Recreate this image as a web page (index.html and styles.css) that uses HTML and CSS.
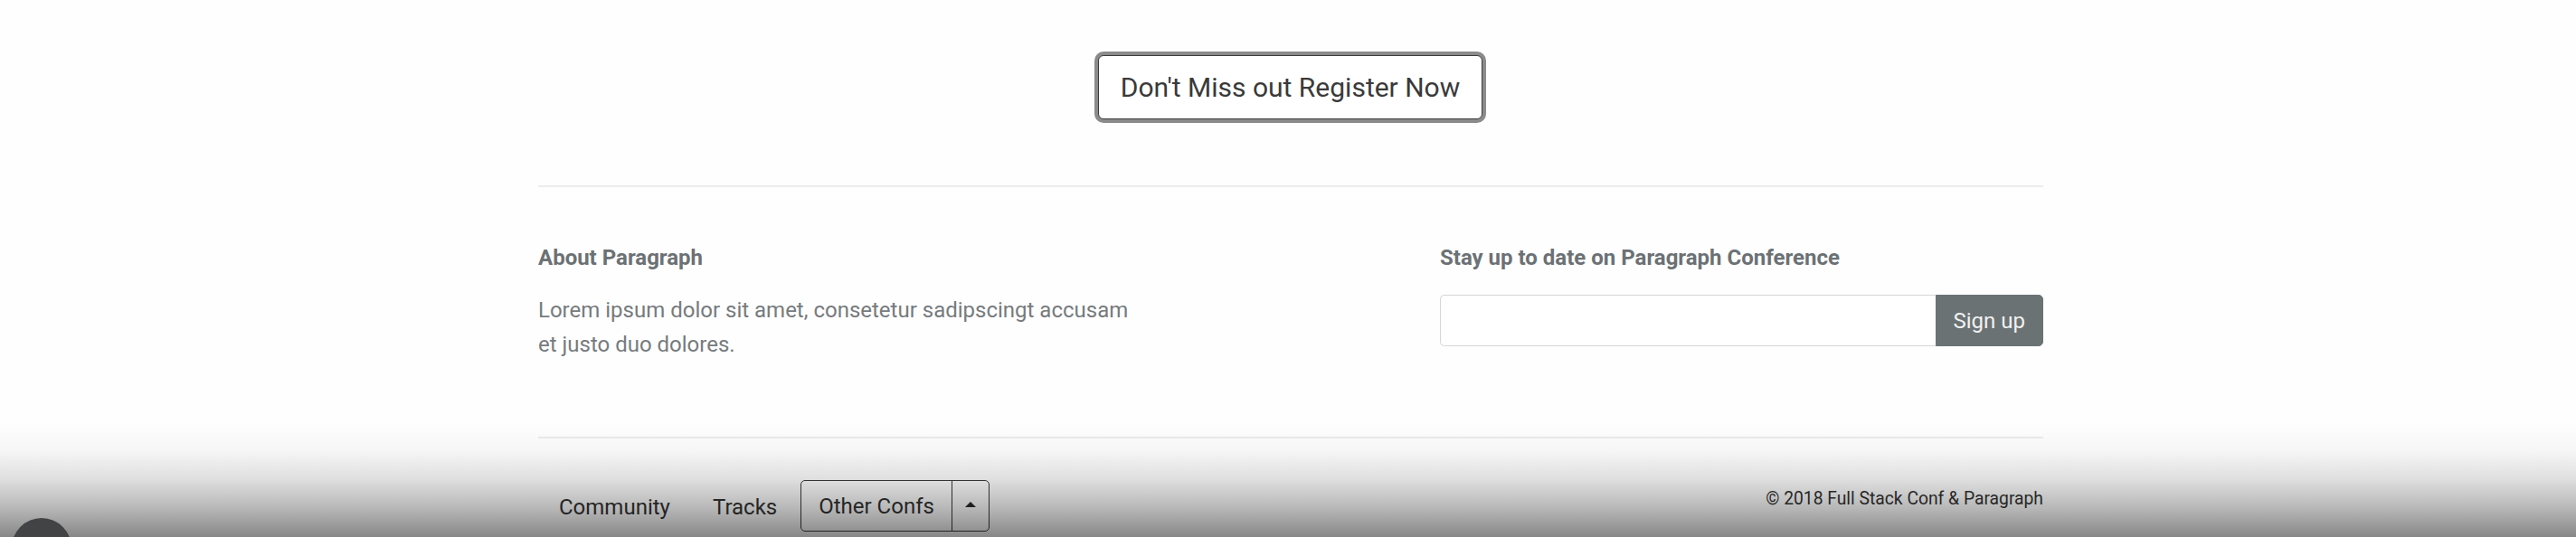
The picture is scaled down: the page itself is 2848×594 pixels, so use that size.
FILE: index.html
```html
<!DOCTYPE html>
<html lang="en">
<head>
<meta charset="utf-8">
<title>Paragraph Conference</title>
<link rel="stylesheet" href="styles.css">
</head>
<body>
<div class="page">
  <section class="cta">
    <button class="btn-register" type="button">Don't Miss out Register Now</button>
  </section>
  <div class="container">
    <hr class="rule">
    <div class="footer-cols">
      <div class="col">
        <h5 class="col-title">About Paragraph</h5>
        <p class="about-text">Lorem ipsum dolor sit amet, consetetur sadipscingt accusam et justo duo dolores.</p>
      </div>
      <div class="col">
        <h5 class="col-title">Stay up to date on Paragraph Conference</h5>
        <form class="input-group">
          <input class="email-input" type="email" aria-label="Email">
          <button class="btn-signup" type="button">Sign up</button>
        </form>
      </div>
    </div>
    <hr class="rule">
    <div class="bottom-bar">
      <nav class="bottom-nav">
        <a class="nav-link" href="#">Community</a>
        <a class="nav-link" href="#">Tracks</a>
        <div class="btn-group">
          <button class="btn-group-main" type="button">Other Confs</button>
          <button class="btn-group-caret" type="button" aria-label="Toggle"><span class="caret"></span></button>
        </div>
      </nav>
      <small class="copyright">© 2018 Full Stack Conf &amp; Paragraph</small>
    </div>
  </div>
</div>
<div class="player-shade">
  <div class="player-dot"></div>
</div>
</body>
</html>
```
FILE: styles.css
```css
html, body {
  margin: 0;
  padding: 0;
  height: 594px;
  overflow: hidden;
  background: #fefefe;
  font-family: Roboto, "Liberation Sans", Arial, sans-serif;
}

.page {
  position: relative;
}

.cta {
  display: flex;
  justify-content: center;
  padding: 61px 0 73px 5px;
}

.btn-register {
  font-family: Roboto, "Liberation Sans", Arial, sans-serif;
  font-size: 30px;
  line-height: 45px;
  color: #3a3a3a;
  background: #fff;
  border: 1px solid #3b3b3b;
  border-radius: 6px;
  padding: 12px 24px;
  box-shadow: 0 0 0 4px #8b8b8b;
  cursor: pointer;
}

.container {
  width: 1664px;
  margin: 0 auto;
  padding-left: 6px;
}

.rule {
  margin: 0;
  border: 0;
  border-top: 2px solid #ececec;
}

.footer-cols {
  display: flex;
  justify-content: space-between;
  padding: 64px 0 83px;
}

.col {
  width: 667px;
}

.col-title {
  margin: 0 0 24px;
  font-size: 24px;
  line-height: 29px;
  font-weight: 700;
  color: #6b7175;
}

.col:last-child .col-title {
  margin-bottom: 26px;
}

.about-text {
  margin: 0;
  font-size: 24px;
  line-height: 38px;
  color: #767b7f;
}

.input-group {
  display: flex;
  margin: 0;
}

.email-input {
  flex: 1;
  height: 57px;
  box-sizing: border-box;
  border: 1px solid #d6d6d6;
  border-right: 0;
  border-radius: 5px 0 0 5px;
  background: #fff;
  font-size: 24px;
  padding: 0 16px;
  margin: 0;
}

.btn-signup {
  height: 57px;
  box-sizing: border-box;
  font-family: Roboto, "Liberation Sans", Arial, sans-serif;
  font-size: 24px;
  color: #f1f1f1;
  background: #6a7273;
  border: 1px solid #6a7273;
  border-radius: 0 5px 5px 0;
  padding: 0 19px;
  margin: 0;
}

.bottom-bar {
  display: flex;
  justify-content: space-between;
  align-items: flex-start;
  padding-top: 46px;
}

.bottom-nav {
  display: flex;
  align-items: center;
  height: 56px;
}

.nav-link {
  font-size: 24px;
  color: #333;
  text-decoration: none;
  padding: 4px 23px 0;
}

.nav-link + .nav-link {
  padding-left: 24px;
  padding-right: 26px;
}

.btn-group {
  display: flex;
  height: 57px;
  box-sizing: border-box;
  border: 1px solid #3a3a3a;
  border-radius: 5px;
}

.btn-group-main,
.btn-group-caret {
  font-family: Roboto, "Liberation Sans", Arial, sans-serif;
  font-size: 24px;
  color: #333;
  background: transparent;
  border: 0;
  margin: 0;
}

.btn-group-main {
  padding: 2px 19px 0;
  border-right: 1px solid #3a3a3a;
}

.btn-group-caret {
  width: 40px;
  display: flex;
  align-items: center;
  justify-content: center;
  padding: 0;
}

.caret {
  width: 0;
  height: 0;
  border-left: 6px solid transparent;
  border-right: 6px solid transparent;
  border-bottom: 6px solid #2a2a2a;
  margin-top: -2px;
}

.copyright {
  font-size: 19.3px;
  line-height: 29px;
  color: #333;
  margin-top: 6px;
}

.player-shade {
  position: absolute;
  left: 0;
  right: 0;
  bottom: 0;
  height: 128px;
  background: linear-gradient(to bottom,
    rgba(0, 0, 0, 0) 0%,
    rgba(0, 0, 0, 0.03) 25%,
    rgba(0, 0, 0, 0.12) 50%,
    rgba(0, 0, 0, 0.28) 75%,
    rgba(0, 0, 0, 0.47) 100%);
  pointer-events: none;
  overflow: hidden;
}

.player-dot {
  position: absolute;
  left: 13px;
  top: 107px;
  width: 66px;
  height: 66px;
  border-radius: 50%;
  background: #424345;
}
```
